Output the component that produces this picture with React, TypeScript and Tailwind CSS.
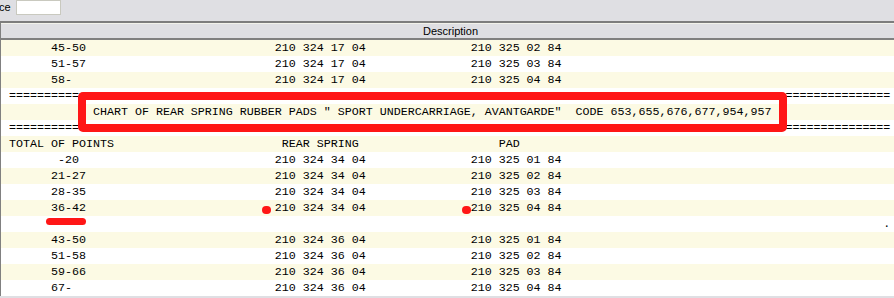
import React from "react";

const COLS = [0, 38, 66];

function line(parts: string[], at: number[] = COLS) {
  let s = "";
  parts.forEach((p, i) => {
    if (!p) return;
    s = s.padEnd(at[i], " ") + p;
  });
  return s;
}

const EQ = "=".repeat(126);

const rows: string[] = [
  line(["      45-50", "210 324 17 04", "210 325 02 84"]),
  line(["      51-57", "210 324 17 04", "210 325 03 84"]),
  line(["      58-", "210 324 17 04", "210 325 04 84"]),
  EQ,
  line([
    '            CHART OF REAR SPRING RUBBER PADS " SPORT UNDERCARRIAGE, AVANTGARDE"  CODE 653,655,676,677,954,957',
  ]),
  EQ,
  line(["TOTAL OF POINTS", "REAR SPRING", "PAD"], [0, 39, 70]),
  line(["       -20", "210 324 34 04", "210 325 01 84"]),
  line(["      21-27", "210 324 34 04", "210 325 02 84"]),
  line(["      28-35", "210 324 34 04", "210 325 03 84"]),
  line(["      36-42", "210 324 34 04", "210 325 04 84"]),
  "".padEnd(125, " ") + ".",
  line(["      43-50", "210 324 36 04", "210 325 01 84"]),
  line(["      51-58", "210 324 36 04", "210 325 02 84"]),
  line(["      59-66", "210 324 36 04", "210 325 03 84"]),
  line(["      67-", "210 324 36 04", "210 325 04 84"]),
];

export default function App() {
  return (
    <div className="w-[894px] h-[298px] overflow-hidden bg-[#dfdfe3] relative">
      {/* Top toolbar */}
      <div className="h-[21px] flex items-start gap-[5px] bg-[#dfdfe3]">
        <span
          className="text-[11px] leading-[15px] text-black -ml-[1px]"
          style={{ fontFamily: '"Liberation Sans", Arial, sans-serif' }}
        >
          ce
        </span>
        <div className="w-[45px] h-[15px] bg-white border border-[#c9c9bf]" />
      </div>
      <div className="h-[2px] bg-[#7d7d7d]" />
      {/* Grid */}
      <div className="border-l border-[#808080] bg-white">
        <div className="h-[1px] bg-[#f2f2ea]" />
        <div
          className="h-[16px] bg-[#dfdfe3] border-b-2 border-[#808080] flex items-center justify-center text-[11px] text-black pl-[6px]"
          style={{ fontFamily: '"Liberation Sans", Arial, sans-serif' }}
        >
          Description
        </div>
        <div
          className="text-[11.67px] leading-[16px] text-black"
          style={{ fontFamily: '"Liberation Mono", "Courier New", monospace' }}
        >
          {rows.map((r, i) => (
            <div
              key={i}
              className={`h-[16px] pl-[8px] whitespace-pre ${
                i % 2 === 0 ? "bg-[#fcfae4]" : "bg-white"
              }`}
            >
              {r}
            </div>
          ))}
        </div>
      </div>

      {/* Annotations drawn over the grid */}
      <div className="absolute left-[78px] top-[92px] w-[709px] h-[40px] border-[8px] border-[#ff1616] rounded-[5px]" />
      <div className="absolute left-[262px] top-[206px] w-[9px] h-[8px] rounded-full bg-[#ff1616]" />
      <div className="absolute left-[462px] top-[206px] w-[9px] h-[8px] rounded-full bg-[#ff1616]" />
      <div className="absolute left-[46px] top-[218px] w-[40px] h-[7px] rounded-full bg-[#ff1616]" />
    </div>
  );
}
